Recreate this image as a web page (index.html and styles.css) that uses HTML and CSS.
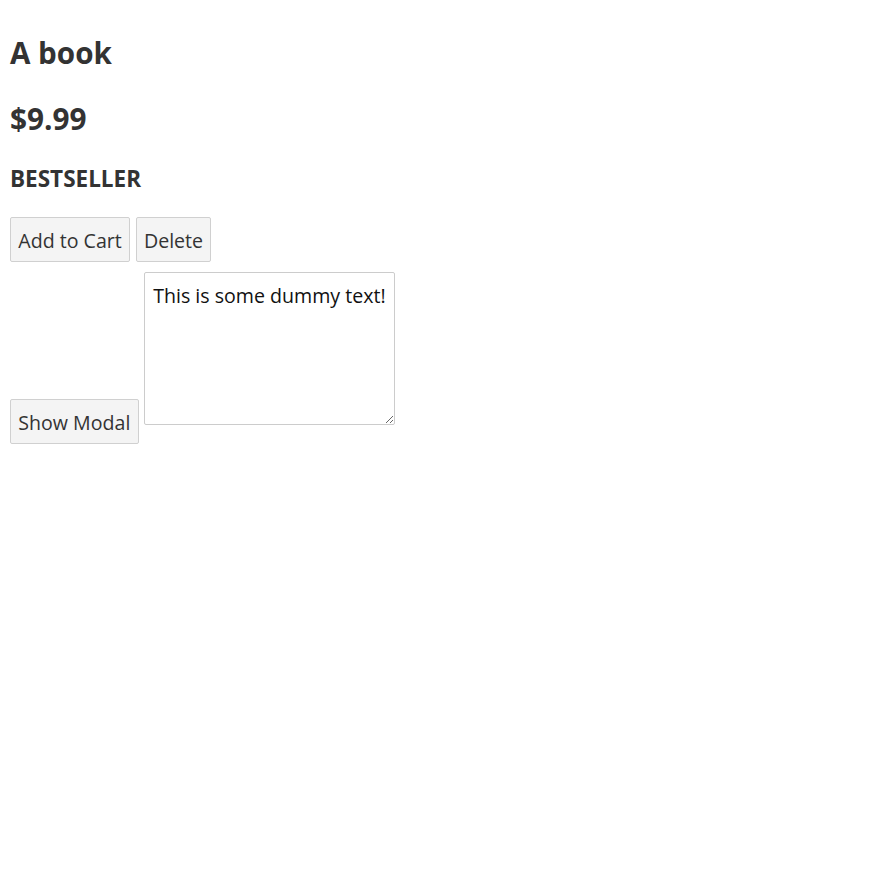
FILE: index.html
```html
<!DOCTYPE html>
<html>
<head>
<meta charset="utf-8">
<link rel="stylesheet" href="styles.css">
</head>
<body>
<div class="page">
  <h1 class="title">A book</h1>
  <h2 class="price">$9.99</h2>
  <h4 class="badge">BESTSELLER</h4>
  <div class="row actions">
    <button class="btn">Add to Cart</button>
    <button class="btn">Delete</button>
  </div>
  <div class="row modal-row">
    <button class="btn">Show Modal</button>
    <textarea class="note">This is some dummy text!</textarea>
  </div>
</div>
</body>
</html>
```
FILE: styles.css
```css
html, body {
  margin: 0;
  padding: 0;
  background: #fff;
}
.page {
  padding: 35px 10px 10px 10px;
  font-family: "Open Sans", "Noto Sans", sans-serif;
  color: #333;
}
.title {
  margin: 0;
  font-size: 29.6px;
  line-height: 36px;
  font-weight: 700;
}
.price {
  margin: 30px 0 0 0;
  font-size: 29.8px;
  line-height: 36px;
  font-weight: 700;
}
.badge {
  margin: 28px 0 0 0;
  font-size: 22.5px;
  line-height: 27px;
  font-weight: 700;
}
.row {
  display: flex;
  gap: 5.5px;
}
.actions {
  margin-top: 25px;
}
.modal-row {
  margin-top: 10px;
  align-items: flex-end;
}
.btn {
  box-sizing: border-box;
  height: 45px;
  margin: 0;
  padding: 2px 7.3px 0 7.3px;
  font-family: "Open Sans", "Noto Sans", sans-serif;
  font-size: 19.6px;
  color: #333;
  background: #f4f4f4;
  border: 1px solid #d0d0d0;
  border-radius: 2px;
}
.note {
  box-sizing: border-box;
  width: 251px;
  height: 153px;
  margin: 0 0 19px 0;
  padding: 10px 8px 8px 8px;
  font-family: "Open Sans", "Noto Sans", sans-serif;
  font-size: 19.6px;
  line-height: 26px;
  color: #111;
  border: 1px solid #ccc;
  border-radius: 2px;
  background: #fff;
}
```
